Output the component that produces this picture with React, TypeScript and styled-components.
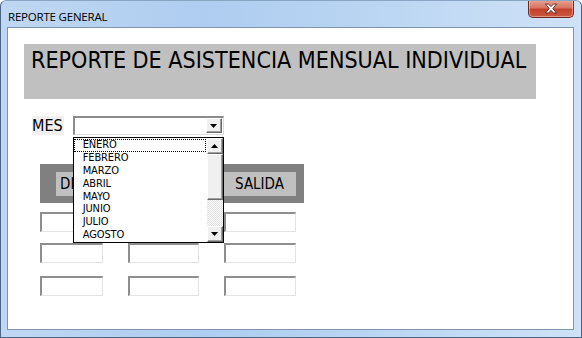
import React from "react";
import styled, { createGlobalStyle } from "styled-components";

const Global = createGlobalStyle`
  html, body { margin: 0; padding: 0; background: #ffffff; }
  body { width: 582px; height: 338px; overflow: hidden; }
`;

const Window = styled.div`
  width: 582px;
  height: 338px;
  box-sizing: border-box;
  display: flex;
  flex-direction: column;
  background: linear-gradient(90deg, #bfd7f2 0%, #aecdf0 35%, #b8d4f2 60%, #cfe2f7 100%);
  border: 1px solid #4c6584;
  border-top-color: #8aa5c4;
  border-radius: 6px 6px 0 0;
  overflow: hidden;
`;

const TitleBar = styled.div`
  height: 26px;
  display: flex;
  align-items: flex-start;
  justify-content: space-between;
  padding: 0 7px 0 7px;
  flex: none;
`;

const Title = styled.span`
  font-family: "Open Sans", "Noto Sans", sans-serif;
  font-size: 11.5px;
  color: #000;
  margin-top: 8px;
  letter-spacing: -0.2px;
`;

const CloseButton = styled.div`
  width: 46px;
  height: 18px;
  margin-top: -1px;
  box-sizing: border-box;
  border: 1px solid #6e2a1f;
  border-top: none;
  border-radius: 0 0 5px 5px;
  background: linear-gradient(180deg, #e8a394 0%, #d77563 45%, #c4412c 55%, #c95a3e 100%);
  box-shadow: inset 0 0 0 1px rgba(255, 210, 200, 0.5);
  display: flex;
  align-items: center;
  justify-content: center;
`;

const Frame = styled.div`
  flex: 1;
  display: flex;
  padding: 0 7px 7px 6px;
`;

const Client = styled.div`
  flex: 1;
  background: #ffffff;
  border: 1px solid #7e93ad;
  position: relative;
  font-family: "DejaVu Sans Condensed", "DejaVu Sans", sans-serif;
  color: #000;
`;

const Heading = styled.div`
  margin: 16px 0 0 16px;
  width: 512px;
  height: 55px;
  background: #c0c0c0;
  box-sizing: border-box;
  padding: 2px 0 0 7px;
  font-size: 23.1px;
  line-height: 28px;
  white-space: nowrap;
`;

const MesRow = styled.div`
  margin: 17px 0 0 24px;
  display: flex;
  align-items: center;
  gap: 9px;
  height: 19px;
`;

const MesLabel = styled.span`
  background: #f0f0f0;
  font-size: 16px;
  line-height: 19px;
  padding: 0 1px 0 0;
`;

const ComboWrap = styled.div`
  position: relative;
  width: 151px;
  height: 19px;
`;

const Combo = styled.div`
  width: 100%;
  height: 100%;
  box-sizing: border-box;
  border: 1px solid #a0a0a0;
  border-right-color: #dcdcdc;
  border-bottom-color: #dcdcdc;
  border-top: 2px solid #8c8c8c;
  border-left: 2px solid #8c8c8c;
  background: #fff;
  display: flex;
  justify-content: flex-end;
  padding: 0 1px 1px 0;
`;

const ArrowBtn = styled.div<{ $h?: number }>`
  width: 16px;
  height: ${(p) => p.$h ?? 15}px;
  box-sizing: border-box;
  background: #f0f0f0;
  border: 1px solid #ffffff;
  border-right-color: #696969;
  border-bottom-color: #696969;
  box-shadow: inset -1px -1px 0 #a0a0a0;
  display: flex;
  align-items: center;
  justify-content: center;
  flex: none;
`;

const DropList = styled.div`
  position: absolute;
  left: 0;
  top: 21px;
  width: 151px;
  height: 106px;
  box-sizing: border-box;
  border: 1px solid #000;
  background: #fff;
  display: flex;
  z-index: 2;
`;

const Items = styled.div`
  flex: 1;
  display: flex;
  flex-direction: column;
  padding-top: 1px;
`;

const Item = styled.div<{ $focus?: boolean }>`
  height: 13px;
  box-sizing: border-box;
  font-size: 11px;
  line-height: 12px;
  padding-left: 9px;
  outline: ${(p) => (p.$focus ? "1px dotted #000" : "none")};
  outline-offset: -1px;
  margin-right: 1px;
  color: #000;
  font-family: "DejaVu Sans Condensed", "DejaVu Sans", sans-serif;
  letter-spacing: -0.1px;
`;

const ScrollBar = styled.div`
  width: 16px;
  display: flex;
  flex-direction: column;
  background-color: #f2f2f2;
  background-image: repeating-conic-gradient(#e2e2e2 0% 25%, #fafafa 0% 50%);
  background-size: 2px 2px;
`;

const Thumb = styled.div`
  height: 46px;
  box-sizing: border-box;
  background: #f0f0f0;
  border: 1px solid #ffffff;
  border-right-color: #696969;
  border-bottom-color: #696969;
  box-shadow: inset -1px -1px 0 #a0a0a0;
`;

const Track = styled.div`
  flex: 1;
`;

const Header = styled.div`
  margin: 29px 0 0 32px;
  width: 264px;
  height: 39px;
  box-sizing: border-box;
  background: #808080;
  padding: 8px 8px 0 16px;
  display: flex;
`;

const HeaderCell = styled.div<{ $w: number; $ml?: number; $left?: boolean }>`
  width: ${(p) => p.$w}px;
  margin-left: ${(p) => p.$ml ?? 0}px;
  height: 24px;
  box-sizing: border-box;
  padding-left: ${(p) => (p.$left ? 4 : 0)}px;
  background: #c0c0c0;
  font-size: 15px;
  line-height: 24px;
  text-align: ${(p) => (p.$left ? "left" : "center")};
  white-space: nowrap;
  overflow: hidden;
`;

const Row = styled.div<{ $mt: number }>`
  margin: ${(p) => p.$mt}px 0 0 32px;
  display: flex;
`;

const Field = styled.div<{ $w: number; $ml?: number }>`
  width: ${(p) => p.$w}px;
  margin-left: ${(p) => p.$ml ?? 0}px;
  height: 20px;
  box-sizing: border-box;
  border: 1px solid #e3e3e3;
  border-top: 2px solid #8e8e8e;
  border-left: 2px solid #8e8e8e;
  background: #fff;
`;

const Down = () => (
  <svg width="7" height="4" viewBox="0 0 7 4">
    <path d="M0 0h7L3.5 4z" fill="#000" />
  </svg>
);
const Up = () => (
  <svg width="7" height="4" viewBox="0 0 7 4">
    <path d="M0 4h7L3.5 0z" fill="#000" />
  </svg>
);

const months = ["ENERO", "FEBRERO", "MARZO", "ABRIL", "MAYO", "JUNIO", "JULIO", "AGOSTO"];

const FieldRow = ({ mt }: { mt: number }) => (
  <Row $mt={mt}>
    <Field $w={63} />
    <Field $w={71} $ml={25} />
    <Field $w={72} $ml={25} />
  </Row>
);

export default function App() {
  return (
    <>
      <Global />
      <Window>
        <TitleBar>
          <Title>REPORTE GENERAL</Title>
          <CloseButton>
            <svg width="14" height="11" viewBox="0 0 14 11">
              <path
                d="M1.5 1h3l2.5 2.6L9.5 1h3L8.8 5.5l3.7 4.5h-3L7 7.4 4.5 10h-3l3.7-4.5z"
                fill="#ffffff"
                stroke="#5a2018"
                strokeWidth="0.9"
                strokeLinejoin="round"
              />
            </svg>
          </CloseButton>
        </TitleBar>
        <Frame>
          <Client>
            <Heading>REPORTE DE ASISTENCIA MENSUAL INDIVIDUAL</Heading>
            <MesRow>
              <MesLabel>MES</MesLabel>
              <ComboWrap>
                <Combo>
                  <ArrowBtn>
                    <Down />
                  </ArrowBtn>
                </Combo>
                <DropList>
                  <Items>
                    {months.map((m, i) => (
                      <Item key={m} $focus={i === 0}>
                        {m}
                      </Item>
                    ))}
                  </Items>
                  <ScrollBar>
                    <ArrowBtn $h={16}>
                      <Up />
                    </ArrowBtn>
                    <Thumb />
                    <Track />
                    <ArrowBtn $h={16}>
                      <Down />
                    </ArrowBtn>
                  </ScrollBar>
                </DropList>
              </ComboWrap>
            </MesRow>
            <Header>
              <HeaderCell $w={20} $left>DI</HeaderCell>
              <HeaderCell $w={72} $ml={52} />
              <HeaderCell $w={73} $ml={23}>SALIDA</HeaderCell>
            </Header>
            <FieldRow mt={9} />
            <FieldRow mt={11} />
            <FieldRow mt={13} />
          </Client>
        </Frame>
      </Window>
    </>
  );
}
